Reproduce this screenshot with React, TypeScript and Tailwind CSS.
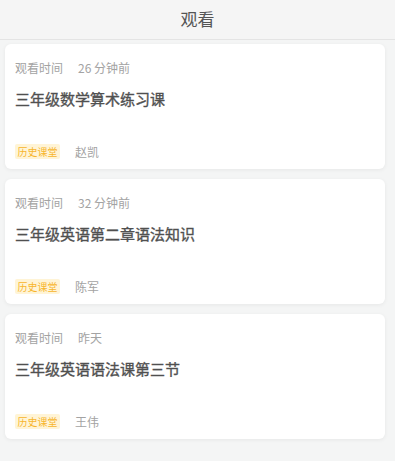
const records = [
  { time: '26 分钟前', title: '三年级数学算术练习课', teacher: '赵凯' },
  { time: '32 分钟前', title: '三年级英语第二章语法知识', teacher: '陈军' },
  { time: '昨天', title: '三年级英语语法课第三节', teacher: '王伟' },
];

export default function App() {
  return (
    <div
      className="w-[405px] h-[461px] bg-white"
      style={{ fontFamily: '"Noto Sans CJK SC", "Noto Sans", sans-serif' }}
    >
      <div className="w-[395px] h-[461px] bg-[#f4f5f5]">
        <div className="h-[40px] bg-[#f5f5f5] border-b border-[#e4e4e4] flex items-center justify-center">
          <span className="text-[17px] text-[#555] leading-none -mt-[3px]">观看</span>
        </div>
        <div className="flex flex-col gap-[10px] pt-[4px]">
          {records.map((r) => (
            <div
              key={r.title}
              className="ml-[5px] w-[380px] h-[125px] bg-white rounded-[6px] shadow-[0_1px_4px_rgba(0,0,0,0.06)] px-[10px] pt-[15px]"
            >
              <div className="flex items-center gap-[15px] text-[12px] leading-[17px] text-[#a3a3a3]">
                <span>观看时间</span>
                <span>{r.time}</span>
              </div>
              <div className="mt-[12px] text-[15px] leading-[22px] font-normal text-[#505050] [-webkit-text-stroke:0.35px_#505050]">
                {r.title}
              </div>
              <div className="mt-[34px] flex items-center gap-[15px]">
                <span className="w-[45px] h-[15px] flex items-center justify-center bg-[#fff4d6] text-[#f7b52c] text-[10px] leading-none rounded-[2px]">
                  历史课堂
                </span>
                <span className="text-[12px] text-[#a3a3a3] leading-none">{r.teacher}</span>
              </div>
            </div>
          ))}
        </div>
      </div>
    </div>
  );
}
